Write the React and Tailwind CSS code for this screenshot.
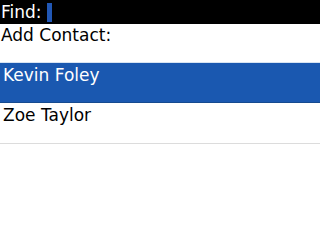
export default function App() {
  return (
    <div className="w-[320px] h-[240px] bg-white overflow-hidden font-['DejaVu_Sans',sans-serif] text-[17px] leading-none">
      {/* search bar */}
      <div className="h-[24px] bg-black flex items-center pl-[1px]">
        <span className="text-white">Find:</span>
        <span className="ml-[5px] w-[5px] h-[19px] bg-[#2157b5]"></span>
      </div>
      <div className="h-[38px] pt-[3px] pl-[1px] text-black">Add Contact:</div>
      <div className="h-[1px] bg-[#d8e4f2]"></div>
      <div className="h-[40px] bg-[#1a58b0] border-b border-[#154a8f] text-white pl-[3px] pt-[4px]">Kevin Foley</div>
      <div className="h-[41px] border-b border-[#dcdcdc] text-black pl-[3px] pt-[4px]">Zoe Taylor</div>
    </div>
  );
}
